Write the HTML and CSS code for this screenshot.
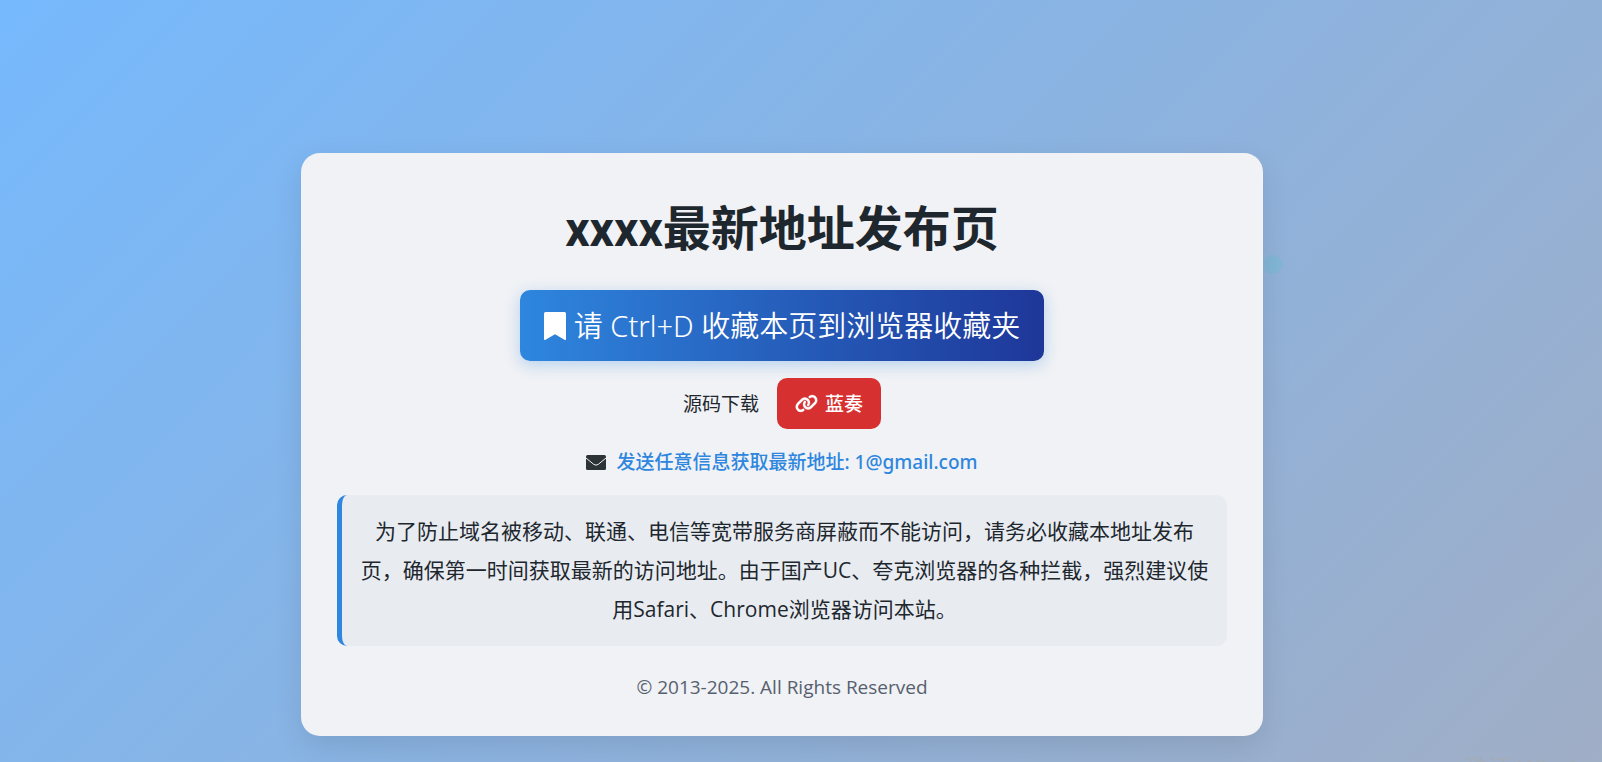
FILE: index.html
```
<!DOCTYPE html>
<html lang="zh-CN">

<head>
    <meta charset="UTF-8">
    <meta name="viewport" content="width=device-width, initial-scale=1.0">
    <title>xxxx最新地址发布页</title>
    <link rel="stylesheet" href="styles.css">
</head>

<body>

    <span class="particle"></span>

    <main class="container">
        <h1>xxxx最新地址发布页</h1>

        <button type="button" class="bookmark">
            <svg class="icon-bookmark" viewBox="0 0 22 28" aria-hidden="true">
                <path d="M1.500 0h19A1.500 1.500 0 0 1 22 1.500V27.300a.7.7 0 0 1-1.100.6L11 22.200 1.100 27.900A.7.7 0 0 1 0 27.300V1.500A1.500 1.500 0 0 1 1.500 0z"/>
            </svg>
            请 Ctrl+D 收藏本页到浏览器收藏夹
        </button>

        <div class="download">
            <span>源码下载</span>
            <a href="#" class="link-button">
                <svg class="icon-link" viewBox="0 0 640 512" aria-hidden="true">
                    <path d="M579.800 267.700c56.500-56.500 56.500-148 0-204.500-50-50-128.800-56.500-186.300-15.400l-1.600 1.100c-14.400 10.300-17.700 30.300-7.400 44.600s30.300 17.700 44.600 7.400l1.600-1.100c32.100-22.900 76-19.300 103.800 8.600 31.500 31.500 31.500 82.500 0 114L422.300 334.800c-31.500 31.500-82.500 31.500-114 0-27.900-27.900-31.500-71.800-8.600-103.800l1.100-1.600c10.300-14.400 6.900-34.400-7.400-44.600s-34.400-6.900-44.600 7.400l-1.100 1.600C206.500 251.200 213 330 263 380c56.500 56.500 148 56.500 204.500 0L579.800 267.700zM60.200 244.300c-56.500 56.500-56.500 148 0 204.500 50 50 128.800 56.500 186.300 15.400l1.600-1.100c14.400-10.300 17.700-30.300 7.400-44.600s-30.300-17.700-44.600-7.400l-1.600 1.100c-32.100 22.900-76 19.300-103.800-8.600C74 372 74 321 105.500 289.500L217.700 177.200c31.500-31.500 82.500-31.500 114 0 27.900 27.900 31.500 71.800 8.600 103.900l-1.100 1.600c-10.300 14.400-6.900 34.400 7.400 44.600s34.400 6.900 44.600-7.400l1.100-1.600C433.500 260.800 427 182 377 132c-56.500-56.500-148-56.500-204.500 0L60.200 244.300z"/>
                </svg>
                <span>蓝奏</span>
            </a>
        </div>

        <div class="mail">
            <svg class="icon-mail" viewBox="0 0 20 15" aria-hidden="true">
                <rect width="20" height="15" rx="1.500"/>
                <path d="M0 3l7.500 6.200a4 4 0 0 0 5 0L20 3"/>
            </svg>
            <a href="mailto:1@gmail.com">发送任意信息获取最新地址: 1@gmail.com</a>
        </div>

        <p class="notice">为了防止域名被移动、联通、电信等宽带服务商屏蔽而不能访问，请务必收藏本地址发布页，确保第一时间获取最新的访问地址。由于国产UC、夸克浏览器的各种拦截，强烈建议使用Safari、Chrome浏览器访问本站。</p>

        <footer>© 2013-2025. All Rights Reserved</footer>
    </main>

    <div class="watermark">激活 Windows</div>

</body>

</html>
```
FILE: styles.css
```
* {
    box-sizing: border-box;
}

body {
    margin: 0;
    min-height: 100vh;
    padding: 153px 38px 26px 0;
    position: relative;
    overflow: hidden;
    font-family: "Open Sans", "Noto Sans CJK SC", sans-serif;
    font-size: 19px;
    color: #2d3436;
    background: linear-gradient(135deg, #76b9fd, #a0aec6);
}

.container {
    position: relative;
    width: 60vw;
    margin: 0 auto;
    padding: 40px 36px 32px;
    display: flex;
    flex-direction: column;
    align-items: center;
    text-align: center;
    background-color: #f0f2f5;
    border-radius: 19px;
    box-shadow: 0 10px 30px rgba(0, 0, 0, 0.1);
}

h1 {
    margin: 0 0 24px;
    font-family: Roboto, "Noto Sans CJK SC", sans-serif;
    font-size: 48px;
    line-height: 73px;
    font-weight: bold;
    color: #1e272e;
}

svg {
    flex: none;
    fill: currentColor;
}

.bookmark {
    display: flex;
    align-items: center;
    gap: 8px;
    height: 71px;
    margin-bottom: 17px;
    padding: 0 24px;
    border: none;
    border-radius: 10px;
    font-family: "Noto Sans", "Noto Sans CJK SC", sans-serif;
    font-size: 29px;
    line-height: 40px;
    font-weight: 350;
    color: #fff;
    background: linear-gradient(90deg, #2e86de, #1e3799);
    box-shadow: 0 4px 15px rgba(46, 134, 222, 0.3);
    cursor: pointer;
}

.icon-bookmark {
    width: 22px;
    height: 28px;
}

.download {
    display: flex;
    align-items: center;
    gap: 18px;
    margin-bottom: 19px;
    line-height: 24px;
    color: #1e272e;
}

.link-button {
    display: flex;
    align-items: center;
    gap: 7px;
    height: 51px;
    padding: 0 18px;
    border-radius: 10px;
    font-weight: 500;
    color: #fff;
    background-color: #d63031;
    text-decoration: none;
}

.icon-link {
    width: 23px;
    height: 19px;
    stroke: currentColor;
    stroke-width: 6px;
}

.mail {
    display: flex;
    align-items: center;
    gap: 10px;
    height: 28px;
    margin-bottom: 19px;
    line-height: 24px;
}

.mail a {
    font-family: "Noto Sans", "Noto Sans CJK SC", sans-serif;
    font-weight: 500;
    color: #2e86de;
    text-decoration: none;
}

.icon-mail {
    width: 20px;
    height: 15px;
}

.icon-mail path {
    fill: none;
    stroke: #f0f2f5;
    stroke-width: 1px;
}

.notice {
    width: 100%;
    margin: 0 0 24px;
    padding: 17px 16px;
    border-left: 5px solid #2e86de;
    border-radius: 10px;
    font-size: 21px;
    line-height: 39px;
    color: #1e272e;
    background-color: #e8ecf1;
}

footer {
    line-height: 34px;
    color: #57606f;
}

.particle {
    position: absolute;
    top: 255px;
    left: 1263px;
    width: 19px;
    height: 19px;
    border-radius: 50%;
    background-color: rgba(116, 185, 210, 0.5);
}

.watermark {
    position: absolute;
    top: 753px;
    left: 1464px;
    font-size: 24px;
    line-height: 30px;
    white-space: nowrap;
    color: #a3acb8;
}
```
